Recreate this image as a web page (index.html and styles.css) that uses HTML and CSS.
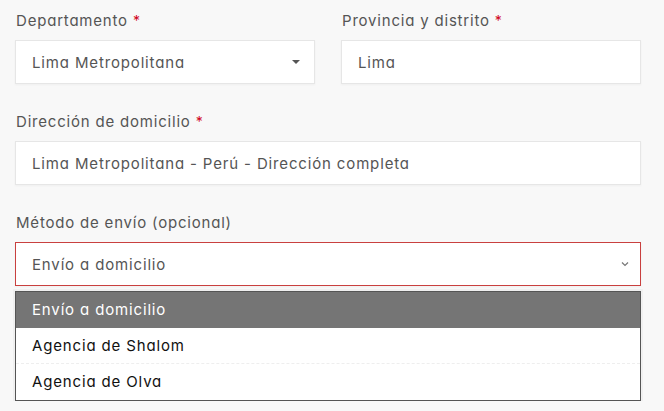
FILE: index.html
```html
<!DOCTYPE html>
<html lang="es">
<head>
<meta charset="utf-8">
<title>Formulario de envío</title>
<link rel="stylesheet" href="styles.css">
</head>
<body>
<form class="form">
  <div class="row">
    <div class="group">
      <label class="label">Departamento <span class="req">*</span></label>
      <div class="field select-small">
        <span class="value">Lima Metropolitana</span>
        <span class="caret"></span>
      </div>
    </div>
    <div class="group">
      <label class="label">Provincia y distrito <span class="req">*</span></label>
      <div class="field"><span class="value">Lima</span></div>
    </div>
  </div>
  <div class="group">
    <label class="label">Dirección de domicilio <span class="req">*</span></label>
    <div class="field"><span class="value">Lima Metropolitana - Perú - Dirección completa</span></div>
  </div>
  <div class="group last">
    <label class="label">Método de envío (opcional)</label>
    <div class="field open">
      <span class="value">Envío a domicilio</span>
      <svg class="chev" width="8" height="6" viewBox="0 0 8 6"><path d="M1 1.5 L4 4.5 L7 1.5" fill="none" stroke="#777" stroke-width="1.2"/></svg>
    </div>
    <ul class="menu">
      <li class="opt active">Envío a domicilio</li>
      <li class="opt">Agencia de Shalom</li>
      <li class="opt">Agencia de Olva</li>
    </ul>
  </div>
</form>
</body>
</html>
```
FILE: styles.css
```css
html, body {
  margin: 0;
  padding: 0;
  background: #f8f8f8;
}
body {
  font-family: Inter, "Noto Sans", sans-serif;
  font-feature-settings: "cv11" 1;
  color: #555;
}
.form {
  width: 626px;
  padding: 10px 0 0 15px;
}
.row {
  display: flex;
  gap: 26px;
}
.row .group {
  flex: 1;
}
.group {
  margin-bottom: 27px;
}
.group.last {
  margin-bottom: 0;
}
.label {
  display: block;
  font-size: 15px;
  letter-spacing: 0.8px;
  line-height: 22px;
  height: 22px;
  margin-bottom: 8px;
  color: #555;
  padding-left: 1px;
}
.req {
  color: #d0021b;
  font-size: 14px;
}
.field {
  box-sizing: border-box;
  height: 44px;
  background: #fff;
  border: 1px solid #e6e6e6;
  display: flex;
  align-items: center;
  padding: 0 16px 0 16px;
  font-size: 15px;
  letter-spacing: 0.85px;
  color: #555;
  box-shadow: 0 1px 2px rgba(0,0,0,0.04);
}
.value {
  flex: 1;
  white-space: nowrap;
}
.caret {
  width: 0;
  height: 0;
  border-left: 4px solid transparent;
  border-right: 4px solid transparent;
  border-top: 4px solid #555;
  margin-right: -2px;
}
.field.open {
  border-color: #c9403f;
  padding-right: 11px;
  margin-top: 1px;
}
.menu {
  list-style: none;
  margin: 5px 0 0;
  padding: 0;
  background: #fff;
  border: 1px solid #555;
  box-shadow: 0 0 0 2px rgba(0,0,0,0.03);
}
.opt {
  height: 35px;
  line-height: 35px;
  padding: 0 16px;
  font-size: 15px;
  letter-spacing: 0.85px;
  color: #111;
  border-bottom: 1px dashed #eee;
}
.opt:last-child {
  border-bottom: none;
  height: 36px;
}
.opt.active {
  background: #757575;
  color: #fff;
  border-bottom: 1px solid #757575;
}
```
